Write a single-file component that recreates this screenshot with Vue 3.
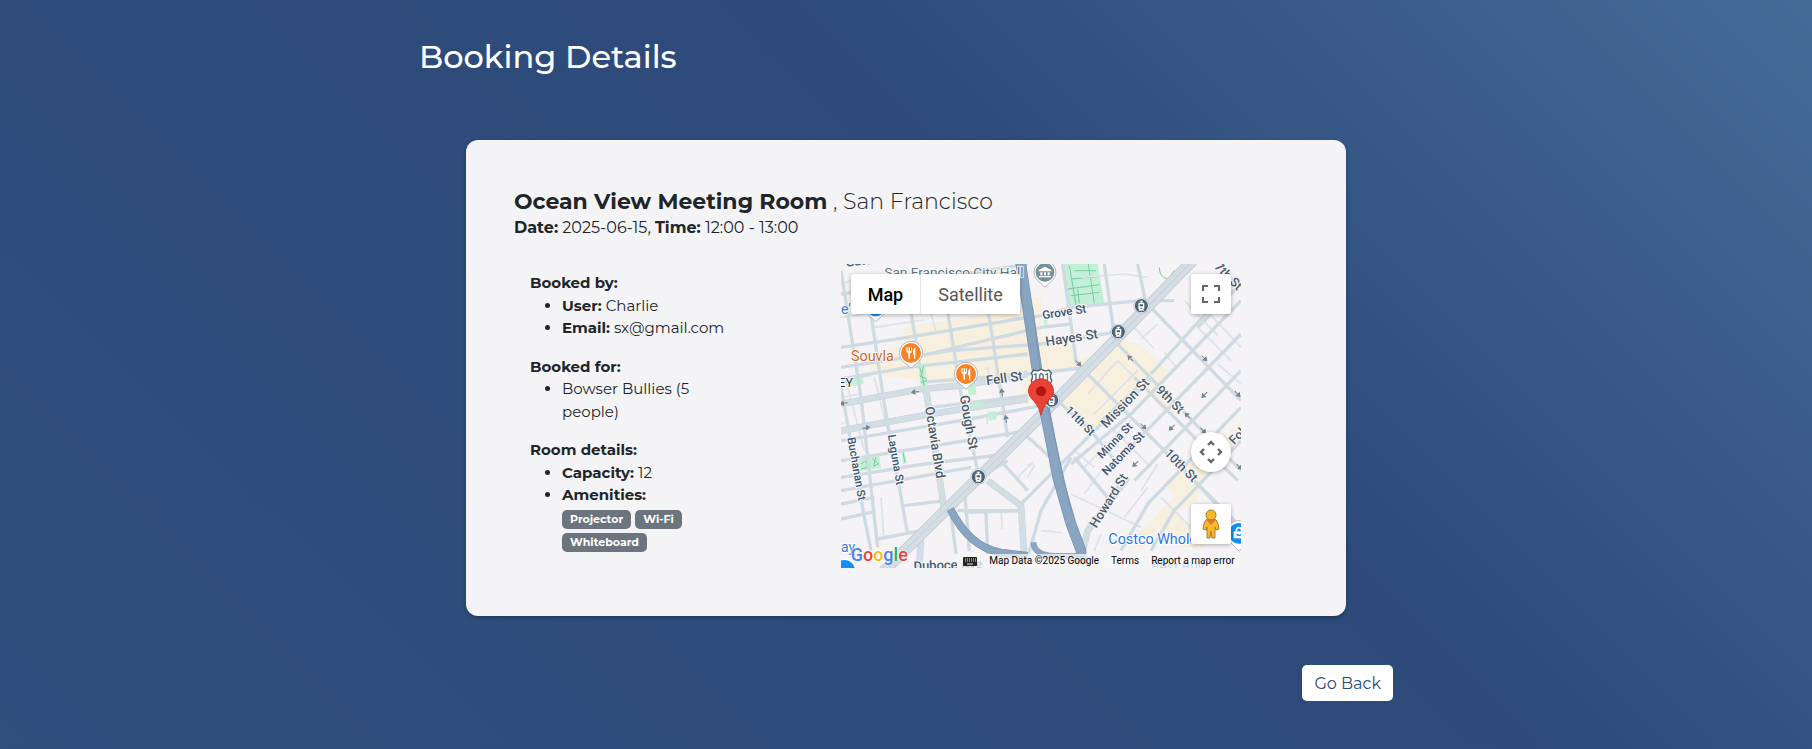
<script setup>
import { ref } from 'vue'

const booking = {
  room: 'Ocean View Meeting Room',
  city: 'San Francisco',
  date: '2025-06-15',
  time: '12:00 - 13:00',
  user: 'Charlie',
  email: 'sx@gmail.com',
  team: 'Bowser Bullies (5 people)',
  capacity: 12,
  amenities: ['Projector', 'Wi-Fi', 'Whiteboard'],
}

const mapType = ref('Map')

const blocks = [
  'M190 190L560 130L560 100L600 100L600 270L720 300L600 330L560 440L540 380L560 330L370 370L90 330L90 270L190 240Z',
  'M600 240L690 225L720 290L830 230L900 240L990 330L940 370L1000 410L1010 450L960 440L900 350L780 490L740 490L650 410L720 320L600 310Z',
  'M970 650L1060 590L1200 470L1200 540L1090 650L1070 710L1010 740L1090 850L1020 850L960 790L900 860L870 830L1000 700Z',
]

const minorRoads = [
  'M100 190L250 168', 'M0 350L90 335', 'M0 400L60 390', 'M270 150L285 205', 'M0 160L110 145',
  'M120 700L128 815', 'M15 350L70 560', 'M100 340L150 540', 'M430 350L520 335', 'M440 310L445 360',
  'M480 740L484 795', 'M600 800L660 806', 'M690 690L900 790', 'M780 810L760 860', 'M830 290L740 390',
  'M830 290L875 335', 'M890 320L760 450', 'M870 180L940 255', 'M950 180L900 225', 'M970 265L1010 315',
  'M860 640L800 740', 'M920 670L850 760', 'M950 600L900 680', 'M780 620L730 690', 'M560 600L580 605L560 640',
  'M530 640L575 595', 'M720 40L850 30', 'M850 30L920 40', 'M1050 90L1200 250', 'M1030 110L1130 215',
  'M1130 300L1200 360', 'M700 560L760 610', 'M730 610L870 470', 'M800 480L930 610', 'M960 700L1050 790',
  'M1070 190L1170 290', 'M0 60L60 40', 'M30 30L60 70', 'M440 480L435 450', 'M0 480L10 475',
]

const roads = [
  'M0 90L560 0', 'M0 250L200 220L560 160L600 155L690 130L900 110L1000 110', 'M0 310L330 260L600 240L820 205',
  'M200 285L600 190L690 180', 'M0 345L200 310L560 270', 'M240 355L560 330L740 310', 'M270 430L560 395',
  'M0 530L360 470L600 425', 'M0 590L250 550L560 500', 'M0 640L250 600L500 570', 'M0 680L390 610',
  'M0 720L100 700', 'M0 765L100 743', 'M190 725L310 710', 'M110 825L240 800', 'M370 745L540 740',
  'M0 20L60 400L110 850', 'M90 150L130 420L200 810', 'M210 145L250 390', 'M0 370L70 760L90 860',
  'M318 130L360 390L410 620', 'M440 130L500 520', 'M370 670L385 860', 'M435 745L440 870', 'M330 750L345 870',
  'M665 0L705 290L720 310', 'M790 0L820 215', 'M890 0L915 120', 'M350 740L520 740',
  'M820 230L1200 620', 'M720 310L1200 790', 'M920 120L1200 410', 'M1200 110L870 450L690 600',
  'M1200 210L800 620', 'M1200 320L880 650', 'M1130 110L930 330', 'M1200 60L1070 190', 'M1200 430L920 720L840 860',
  'M1200 530L1000 740L930 860', 'M1050 640L1200 800', 'M530 730L640 620L780 480', 'M550 510L640 590',
  'M470 580L560 680', 'M500 590L450 620', 'M750 500L830 600', 'M650 410L760 510', 'M690 580L600 740L560 880',
  'M700 580L800 700', 'M880 340L1060 520L1190 650',
]

const wideRoads = [
  'M0 420L240 375L360 365L560 330', 'M0 500L270 450L560 405', 'M255 375L310 740',
  'M780 480L930 340', 'M440 650L540 725L550 880', 'M860 640L740 800L720 880', 'M240 810L235 912',
]

const arrows = [
  { x: 222, y: 384, r: 172 }, { x: 8, y: 418, r: 172 }, { x: 76, y: 491, r: -8 },
  { x: 483, y: 385, r: -97 }, { x: 495, y: 465, r: -97 }, { x: 712, y: 298, r: 45 },
  { x: 868, y: 283, r: 225 }, { x: 1090, y: 283, r: 45 }, { x: 1090, y: 393, r: 135 },
  { x: 907, y: 487, r: 45 }, { x: 992, y: 491, r: 135 }, { x: 1040, y: 455, r: 225 },
  { x: 1087, y: 500, r: 45 }, { x: 883, y: 600, r: 135 }, { x: 1190, y: 390, r: 45 }, { x: 1195, y: 608, r: 45 },
]

const streets = [
  { name: 'Grove St', x: 606, y: 166, r: -9, s: 35, navy: true },
  { name: 'Hayes St', x: 616, y: 247, r: -9, s: 40 },
  { name: 'Fell St', x: 437, y: 364, r: -8, s: 40 },
  { name: 'Gough St', x: 356, y: 396, r: 80, s: 40 },
  { name: 'Octavia Blvd', x: 252, y: 430, r: 81, s: 39 },
  { name: 'Laguna St', x: 140, y: 514, r: 80, s: 34, navy: true },
  { name: 'Buchanan St', x: 19, y: 522, r: 80, s: 34, navy: true },
  { name: '11th St', x: 671, y: 440, r: 45, s: 34, navy: true },
  { name: 'Mission St', x: 796, y: 494, r: -46, s: 40 },
  { name: '9th St', x: 943, y: 380, r: 45, s: 38 },
  { name: 'Minna St', x: 783, y: 586, r: -46, s: 34, navy: true },
  { name: 'Natoma St', x: 797, y: 636, r: -46, s: 35, navy: true },
  { name: '10th St', x: 968, y: 570, r: 45, s: 38 },
  { name: 'Howard St', x: 766, y: 794, r: -58, s: 39 },
  { name: 'Folsom St', x: 1180, y: 544, r: -46, s: 38 },
  { name: '7th St', x: 1118, y: 10, r: 45, s: 38 },
  { name: 'Duboce Ave', x: 218, y: 920, r: -2, s: 39 },
  { name: 'Gate', x: 15, y: 8, r: -6, s: 38 },
]

const stations = [
  { x: 901, y: 125 }, { x: 832, y: 203 }, { x: 632, y: 408 }, { x: 412, y: 638 },
]

const restaurants = [{ x: 210, y: 267 }, { x: 375, y: 330 }]
</script>

<template>
  <div class="page">
    <main class="content">
      <h1 class="title">Booking Details</h1>

      <section class="card">
        <header>
          <h2 class="room"><strong>{{ booking.room }}</strong> , {{ booking.city }}</h2>
          <p class="when">
            <strong>Date:</strong> {{ booking.date }}, <strong>Time:</strong> {{ booking.time }}
          </p>
        </header>

        <div class="columns">
          <div class="details">
            <h3>Booked by:</h3>
            <ul>
              <li><strong>User:</strong> {{ booking.user }}</li>
              <li><strong>Email:</strong> {{ booking.email }}</li>
            </ul>
            <h3>Booked for:</h3>
            <ul>
              <li>{{ booking.team }}</li>
            </ul>
            <h3>Room details:</h3>
            <ul>
              <li><strong>Capacity:</strong> {{ booking.capacity }}</li>
              <li>
                <strong>Amenities:</strong>
                <div class="badges">
                  <span v-for="item in booking.amenities" :key="item" class="badge">{{ item }}</span>
                </div>
              </li>
            </ul>
          </div>

          <div class="map">
            <svg class="canvas" viewBox="0 0 1200 912" preserveAspectRatio="xMidYMid slice" role="img" aria-label="Map of San Francisco">
              <rect width="1200" height="912" fill="#f5f3f5" />
              <path v-for="d in blocks" :key="d" :d="d" fill="#f8f0de" />

              <g fill="#c1f0d5">
                <path d="M668 0L770 0L790 120L685 125Z" />
                <path d="M48 585L115 576L120 612L55 621Z" />
                <path d="M20 345L65 337L68 360L30 366Z" />
                <path d="M182 564L190 562L197 598L186 600Z" />
                <path d="M608 168L618 166L620 188L610 190Z" />
              </g>
              <g class="lines" stroke="#7cc9a5" stroke-width="3">
                <path d="M685 5L705 122M742 0L760 118M700 20H765M690 45L768 38M680 75L775 62M690 95L775 85M710 75L715 118" />
                <path d="M60 600L75 590L80 610L60 615M95 585L112 600L98 606L104 580" />
                <path d="M955 10Q955 40 980 45L1000 20M350 742H540M186 565L192 595" />
              </g>

              <g class="lines" stroke="#dbe2e8" stroke-width="5">
                <path v-for="d in minorRoads" :key="d" :d="d" />
              </g>
              <g class="lines" stroke="#d0dae2" stroke-width="10">
                <path v-for="d in roads" :key="d" :d="d" />
              </g>
              <g class="lines" stroke="#c6d1da" stroke-width="20">
                <path v-for="d in wideRoads" :key="d" :d="d" />
              </g>
              <g class="lines" stroke="#d3dde4" stroke-width="17">
                <path v-for="d in wideRoads" :key="d" :d="d" />
              </g>
              <g fill="#c1f0d5">
                <path d="M378 368L402 364L407 390L385 395Z" />
                <path d="M392 417L425 411L428 426L395 431Z" />
                <path d="M440 445L465 441L467 466L443 470Z" />
                <path d="M232 303L252 300L260 368L240 371Z" />
              </g>
              <path class="lines" d="M236 308L250 365M248 304L240 340M236 335L256 345M240 355L258 350" stroke="#7cc9a5" stroke-width="3" />
              <path class="lines" d="M1055 -10L600 455L120 930" stroke="#bcc9d3" stroke-width="34" />
              <path class="lines" d="M1055 -10L600 455L120 930" stroke="#d4dde4" stroke-width="30" />
              <path class="lines" d="M1055 -10L600 455L120 930" stroke="#c3cdd6" stroke-width="3" />

              <g class="lines">
                <path d="M538 -10L590 330L650 640L690 780L720 860V900" stroke="#7591b0" stroke-width="32" />
                <path d="M538 -10L590 330L650 640L690 780L720 860V900" stroke="#8aa5c1" stroke-width="28" />
                <path d="M575 130L600 340L690 740" stroke="#7995b4" stroke-width="3" />
                <path d="M328 735Q385 850 480 866L560 876" stroke="#7591b0" stroke-width="24" />
                <path d="M328 735Q385 850 480 866L560 876" stroke="#8aa5c1" stroke-width="20" />
                <path d="M577 835Q580 875 640 876L720 876" stroke="#8aa5c1" stroke-width="18" />
              </g>

              <g v-for="(a, i) in arrows" :key="i" :transform="`translate(${a.x} ${a.y}) rotate(${a.r})`">
                <path d="M-12 0H6M1 -6L10 0L1 6Z" fill="#74818e" stroke="#74818e" stroke-width="3" />
              </g>

              <g class="street">
                <text
                  v-for="s in streets"
                  :key="s.name"
                  :font-size="s.s"
                  :fill="s.navy ? '#3c5170' : '#4c5a68'"
                  :transform="`translate(${s.x} ${s.y}) rotate(${s.r})`"
                >{{ s.name }}</text>
              </g>

              <g class="place">
                <text x="130" y="40" fill="#5b7680" font-size="41">San Francisco City Hall</text>
                <text x="30" y="290" fill="#d0662a" font-size="43">Souvla</text>
                <text x="-8" y="369" fill="#303236" font-size="38">EY</text>
                <text x="0" y="151" fill="#2f7de1" font-size="42">e's</text>
                <text x="0" y="864" fill="#2f7de1" font-size="42">ay</text>
                <text x="802" y="840" fill="#2878e6" font-size="43">Costco Whole</text>
                <text x="930" y="922" fill="#2878e6" font-size="41">Best Buy</text>
              </g>

              <g transform="translate(104 130)">
                <path d="M0 43L-20 25A32 32 0 1 1 20 25Z" fill="#fff" stroke="#b3babf" stroke-width="3" />
                <circle r="27" fill="#128ff5" />
              </g>
              <g transform="translate(612 25)">
                <path d="M0 45L-21 25A33 33 0 1 1 21 25Z" fill="#fff" stroke="#b3babf" stroke-width="3" />
                <circle r="28" fill="#78909c" />
                <path d="M-19 -7L0 -17L19 -7V-3H-19ZM-14 0H-8V9H-14ZM-3 0H3V9H-3ZM8 0H14V9H8ZM-18 11H18V15H-18Z" fill="#fff" />
              </g>
              <g v-for="r in restaurants" :key="r.x" :transform="`translate(${r.x} ${r.y})`">
                <path d="M0 45L-22 27A35 35 0 1 1 22 27Z" fill="#fff" stroke="#b3babf" stroke-width="3" />
                <circle r="30" fill="#fd8224" />
                <path d="M-14 -17V-6Q-14 0 -8 1V17H-3V1Q3 0 3 -6V-17H0V-6H-3V-17H-7V-6H-10V-17ZM13 -17Q6 -14 6 -5V4H9V17H13Z" fill="#fff" />
              </g>
              <g transform="translate(1194 808)">
                <path d="M0 54L-24 29A38 38 0 1 1 24 29Z" fill="#fff" stroke="#b3babf" stroke-width="3" />
                <circle r="31" fill="#128ff5" />
                <path d="M-16 -6H16V15H-16Z" fill="#fff" />
                <path d="M-8 -6Q-8 -17 0 -17Q8 -17 8 -6" fill="none" stroke="#fff" stroke-width="5" />
                <path d="M-8 2Q0 10 8 2" fill="none" stroke="#128ff5" stroke-width="4" />
              </g>
              <g transform="translate(10 920)">
                <circle r="37" fill="#fff" />
                <circle r="32" fill="#128ff5" />
              </g>

              <g v-for="s in stations" :key="s.x" :transform="`translate(${s.x} ${s.y})`">
                <circle r="24" fill="#b3babf" />
                <circle r="22" fill="#fff" />
                <circle r="20" fill="#4c6478" />
                <path d="M-5 -15H5V-12H2V-9H6Q9 -9 9 -6V8Q9 11 6 11L8 15H-8L-6 11Q-9 11 -9 8V-6Q-9 -9 -6 -9H-2V-12H-5Z" fill="#fff" />
                <path d="M-5 -4H5V2H-5ZM-3 6H3V9H-3Z" fill="#4c6478" />
              </g>

              <path d="M578 318Q590 324 601 316Q612 324 624 318L631 328Q625 336 632 350Q628 368 601 374Q574 368 571 350Q578 336 571 328Z" fill="#fff" stroke="#4f5a66" stroke-width="4" />
              <text x="601" y="352" font-size="30" text-anchor="middle" fill="#4f5a66" class="shield">101</text>

              <path d="M600 454Q596 432 579 412Q562 396 562 382A38 38 0 1 1 638 382Q638 396 621 412Q604 432 600 454Z" fill="#ea4335" stroke="#c5221f" stroke-width="2" />
              <circle cx="600" cy="382" r="15" fill="#b31412" />
            </svg>

            <div class="map-types">
              <button
                v-for="t in ['Map', 'Satellite']"
                :key="t"
                type="button"
                :class="{ active: mapType === t }"
                @click="mapType = t"
              >{{ t }}</button>
            </div>

            <button class="control fullscreen" type="button" aria-label="Toggle fullscreen view">
              <svg viewBox="0 0 18 18" width="18" height="18">
                <path d="M0 0H6V2H2V6H0ZM12 0H18V6H16V2H12ZM0 12H2V16H6V18H0ZM16 12H18V18H12V16H16Z" fill="#666" />
              </svg>
            </button>
            <button class="control camera" type="button" aria-label="Map camera controls">
              <svg viewBox="0 0 24 24" width="24" height="24" fill="none" stroke="#666" stroke-width="2.4">
                <path d="M9 5L12 2L15 5M9 19L12 22L15 19M5 9L2 12L5 15M19 9L22 12L19 15" />
              </svg>
            </button>
            <button class="control pegman" type="button" aria-label="Street View">
              <svg viewBox="0 0 18 30" width="18" height="30" stroke="#a8793a" stroke-width="1">
                <path d="M5 10Q3 11 2 15L1 20L4 21L5 18V29H8L9 22L10 29H13V18L14 21L17 20L16 15Q15 11 13 10Z" fill="#fbb928" />
                <path d="M4 11L9 16L14 11Z" fill="#e07a2b" stroke="none" />
                <circle cx="9" cy="6" r="5" fill="#fbb928" />
              </svg>
            </button>

            <div class="google" aria-label="Google">
              <span class="b">G</span><span class="r">o</span><span class="y">o</span><span class="b">g</span><span class="g">l</span><span class="r">e</span>
            </div>

            <div class="attribution">
              <button type="button" aria-label="Keyboard shortcuts">
                <svg viewBox="0 0 14 9" width="14" height="9">
                  <rect width="14" height="9" rx="1" fill="#222" />
                  <path d="M2 2H13M2 4H13" stroke="#eee" stroke-width="1" stroke-dasharray="1 1" />
                  <path d="M4 7H10" stroke="#eee" stroke-width="1" />
                </svg>
              </button>
              <span>Map Data ©2025 Google</span>
              <a href="#terms">Terms</a>
              <a href="#report">Report a map error</a>
            </div>
          </div>
        </div>
      </section>

      <div class="actions">
        <button type="button" class="back">Go Back</button>
      </div>
    </main>
  </div>
</template>

<style>
body {
  margin: 0;
}
</style>

<style scoped>
.page {
  box-sizing: border-box;
  min-height: 100vh;
  padding: 37px 24px 48px;
  background: linear-gradient(45deg, #314f7d 0%, #2d4a7a 60%, #466b97 100%);
  color: #212529;
  font-family: Montserrat, Inter, sans-serif;
  font-size: 15px;
  line-height: 1.5;
}
.content {
  max-width: 974px;
  margin: 0 auto;
}
.title {
  margin: 0 0 63px;
  color: #fff;
  font-size: 32px;
  font-weight: 500;
  line-height: 40px;
}
.card {
  margin: 0 47px;
  padding: 48px;
  border-radius: 12px;
  background: #f4f4f7;
  box-shadow: 0 2px 4px rgba(0, 0, 0, 0.25);
}
.room {
  margin: 0;
  font-size: 22px;
  font-weight: 300;
  line-height: 28px;
}
.when {
  margin: 0 0 24px;
  font-size: 16px;
  line-height: 24px;
}
.columns {
  display: grid;
  grid-template-columns: 5fr 7fr;
}
.details {
  max-width: 200px;
  padding: 8px 16px 0;
}
h3 {
  margin: 0;
  font-size: 15px;
  font-weight: 700;
}
strong {
  font-weight: 700;
}
ul {
  margin: 0;
  padding-left: 32px;
}
ul + h3 {
  margin-top: 16px;
}
.badges {
  display: flex;
  flex-wrap: wrap;
  gap: 4px;
  padding-top: 3px;
}
.badge {
  padding: 4px 8px;
  border-radius: 5px;
  background: #6c757d;
  color: #fff;
  font-size: 11px;
  font-weight: 700;
  line-height: 11px;
}
.map {
  position: relative;
  max-width: 400px;
  height: 304px;
  overflow: hidden;
  font-family: Roboto, sans-serif;
}
.canvas {
  display: block;
  width: 100%;
  height: 100%;
}
.lines {
  fill: none;
  stroke-linejoin: round;
}
.street text {
  font-weight: 500;
  paint-order: stroke;
  stroke: #f7f8fa;
  stroke-width: 6px;
}
.place text {
  paint-order: stroke;
  stroke: #fff;
  stroke-width: 5px;
}
.shield {
  font-weight: 500;
}
button {
  margin: 0;
  padding: 0;
  border: 0;
  background: #fff;
  font-family: inherit;
  cursor: pointer;
}
.map-types {
  position: absolute;
  top: 10px;
  left: 10px;
  display: flex;
  border-radius: 2px;
  box-shadow: 0 1px 4px rgba(0, 0, 0, 0.3);
}
.map-types button {
  height: 40px;
  padding: 0 17px;
  color: #565656;
  font-size: 18px;
  border-radius: 2px;
}
.map-types button + button {
  border-left: 1px solid #e8e8e8;
}
.map-types .active {
  color: #000;
  font-weight: 500;
}
.control {
  position: absolute;
  right: 10px;
  display: flex;
  align-items: center;
  justify-content: center;
  width: 40px;
  height: 40px;
  border-radius: 2px;
  box-shadow: 0 1px 4px rgba(0, 0, 0, 0.3);
}
.fullscreen {
  top: 10px;
}
.camera {
  bottom: 96px;
  border-radius: 50%;
}
.pegman {
  bottom: 24px;
}
.google {
  position: absolute;
  left: 10px;
  bottom: 1px;
  display: flex;
  font-size: 18px;
  font-weight: 500;
  line-height: 24px;
  text-shadow: 0 0 2px #fff, 0 0 2px #fff;
}
.b {
  color: #4285f4;
}
.r {
  color: #ea4335;
}
.y {
  color: #fbbc05;
}
.g {
  color: #34a853;
}
.attribution {
  position: absolute;
  right: 0;
  bottom: 0;
  display: flex;
  align-items: center;
  gap: 12px;
  height: 14px;
  padding: 0 6px;
  background: rgba(245, 245, 245, 0.75);
  color: #000;
  font-size: 10px;
  line-height: 14px;
}
.attribution button {
  display: flex;
  background: none;
}
.attribution a {
  color: inherit;
  text-decoration: none;
}
.actions {
  display: flex;
  justify-content: flex-end;
  margin-top: 49px;
}
.back {
  height: 36px;
  padding: 0 12px;
  border-radius: 5px;
  color: #2d4a7a;
  font-size: 16px;
}
</style>
